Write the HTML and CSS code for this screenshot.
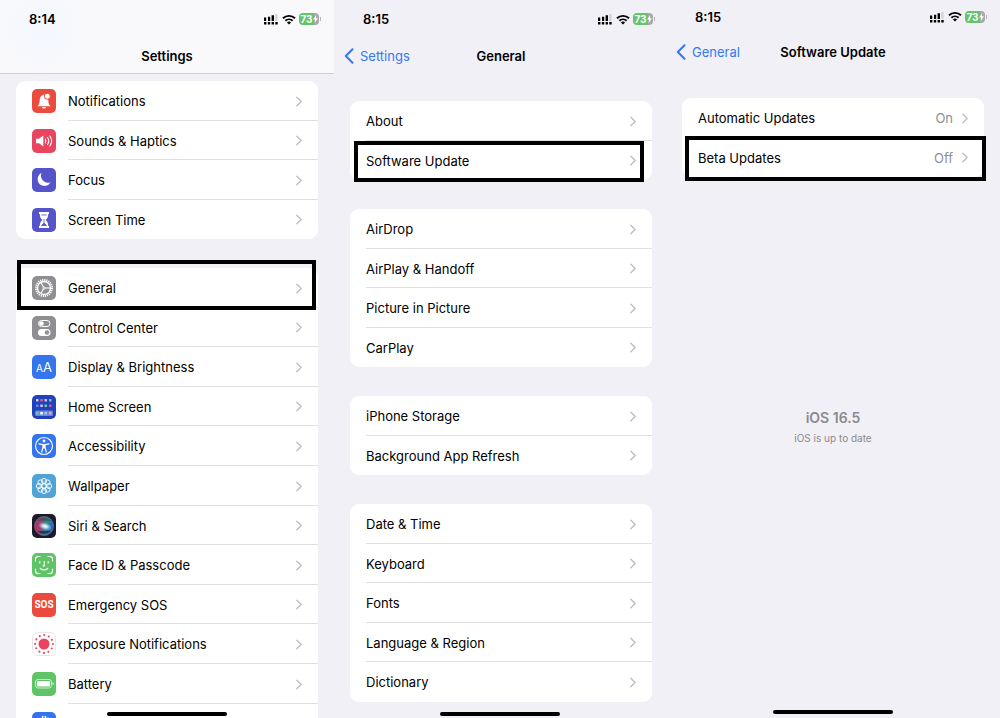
FILE: index.html
```html
<!DOCTYPE html>
<html lang="en">
<head>
    <meta charset="UTF-8">
    <meta name="viewport" content="width=device-width, initial-scale=1.0">
    <title>Settings</title>
    <link rel="stylesheet" href="styles.css">
</head>
<body>
    <svg class="sprite" aria-hidden="true">
        <symbol id="chevron" viewBox="0 0 7 12">
            <path d="M1 1l5 5-5 5" fill="none" stroke="#c0c0c4" stroke-width="1.7" stroke-linecap="round" stroke-linejoin="round"/>
        </symbol>
        <symbol id="back" viewBox="0 0 10 16">
            <path d="M8.5 1.2L1.8 8l6.7 6.8" fill="none" stroke="#3478f0" stroke-width="2" stroke-linecap="round" stroke-linejoin="round"/>
        </symbol>
        <symbol id="signal" viewBox="0 0 14 12">
            <path d="M0 4.6h2.2V8H0zM4 3.8h2.2V8H4zM7.6 2.2h2.4V8H7.6z"/>
            <path d="M11.4 1h2v7h-2z" fill="#cfcfd3"/>
            <path d="M0 9h2.4v2.4H0zM3.8 9h2.4v2.400H3.8zM7.6 9H10v2.400H7.6zM11.300 9h2.400v2.400h-2.400z"/>
        </symbol>
        <symbol id="wifi" viewBox="0 0 14 11">
            <path d="M1 4.3a8.6 8.6 0 0 1 12 0M3.4 6.8a5.2 5.2 0 0 1 7.2 0" fill="none" stroke="#000" stroke-width="1.9"/>
            <path d="M7 10.6L4.9 8.5a3 3 0 0 1 4.2 0z"/>
        </symbol>
        <symbol id="bolt" viewBox="0 0 6 10">
            <path d="M4 0L0 5.6h2.5L2 10l4-5.8H3.4z" fill="#fff"/>
        </symbol>
    </svg>

    <main class="screens">
        <section class="screen screen-settings">
            <header class="top">
                <div class="status">
                    <span class="time">8:14</span>
                    <svg class="signal"><use href="#signal"/></svg>
                    <svg class="wifi"><use href="#wifi"/></svg>
                    <span class="battery">73<svg class="bolt"><use href="#bolt"/></svg></span>
                </div>
                <div class="nav">
                    <h1>Settings</h1>
                </div>
            </header>

            <ul class="group">
                <li><a class="row" href="#">
                    <svg class="icon" viewBox="0 0 24 24">
                        <rect width="24" height="24" rx="5" fill="#ea4b3d"/>
                        <path d="M5.5 17.2c1.7-1.5 2-3 2.2-6C7.900 8 9.500 5.700 12 5.700s4.100 2.300 4.300 5.500c.2 3 .5 4.500 2.200 6zM10 18h4a2 1.500 0 0 1-4 0z" fill="#fff"/>
                        <circle cx="15.300" cy="7.300" r="3" fill="#fff" stroke="#ea4b3d"/>
                    </svg>
                    <span class="label">Notifications</span><svg class="chevron"><use href="#chevron"/></svg>
                </a></li>
                <li><a class="row" href="#">
                    <svg class="icon" viewBox="0 0 24 24">
                        <rect width="24" height="24" rx="5" fill="#e8455f"/>
                        <path d="M4 9.800h3L11.300 6.500v11L7 14.200H4z" fill="#fff"/>
                        <path d="M13.300 10.200q1.200 1.800 0 3.600M15.500 8.500q2.500 3.500 0 7M17.800 7q3.600 5 0 10" fill="none" stroke="#fff" stroke-width="1.100" stroke-linecap="round"/>
                    </svg>
                    <span class="label">Sounds &amp; Haptics</span><svg class="chevron"><use href="#chevron"/></svg>
                </a></li>
                <li><a class="row" href="#">
                    <svg class="icon" viewBox="0 0 24 24">
                        <rect width="24" height="24" rx="5" fill="#5654ca"/>
                        <path d="M9.500 5a7 7 0 0 0 9 9.200A6.800 6.800 0 1 1 9.500 5z" fill="#fff"/>
                    </svg>
                    <span class="label">Focus</span><svg class="chevron"><use href="#chevron"/></svg>
                </a></li>
                <li><a class="row" href="#">
                    <svg class="icon" viewBox="0 0 24 24">
                        <rect width="24" height="24" rx="5" fill="#5654ca"/>
                        <path d="M7 4h10v2h-.8c0 3-1 4.700-2.700 6 1.700 1.300 2.700 3 2.700 6h.8v2H7v-2h.8c0-3 1-4.700 2.700-6-1.700-1.300-2.700-3-2.700-6H7z" fill="#fff"/>
                        <path d="M9.300 7h5.400M12 11v4M9.500 17.500L12 15l2.500 2.500z" fill="#5654ca" stroke="#5654ca" stroke-width=".8"/>
                    </svg>
                    <span class="label">Screen Time</span><svg class="chevron"><use href="#chevron"/></svg>
                </a></li>
            </ul>

            <ul class="group">
                <li class="marked"><a class="row" href="#">
                    <svg class="icon" viewBox="0 0 24 24">
                        <rect width="24" height="24" rx="5" fill="#8e8e93"/>
                        <circle cx="12" cy="12" r="8" fill="none" stroke="#fff" stroke-width="2" stroke-dasharray="1.200 .894"/>
                        <circle cx="12" cy="12" r="6.500" fill="none" stroke="#fff" stroke-width="1.300"/>
                        <path d="M12 12h6M12 12L9 6.800M12 12l-3 5.200" stroke="#fff" stroke-width="1.100"/>
                        <circle cx="12" cy="12" r="1.500" fill="#fff"/>
                        <circle cx="12" cy="12" r=".7" fill="#8e8e93"/>
                    </svg>
                    <span class="label">General</span><svg class="chevron"><use href="#chevron"/></svg>
                </a></li>
                <li><a class="row" href="#">
                    <svg class="icon" viewBox="0 0 24 24">
                        <rect width="24" height="24" rx="5" fill="#8e8e93"/>
                        <rect x="6.500" y="4.500" width="11.500" height="6" rx="3" fill="none" stroke="#fff"/>
                        <circle cx="9.500" cy="7.500" r="2.300" fill="#fff"/>
                        <rect x="6" y="13" width="12.500" height="7" rx="3.500" fill="#fff"/>
                        <circle cx="15" cy="16.500" r="2.200" fill="#8e8e93"/>
                    </svg>
                    <span class="label">Control Center</span><svg class="chevron"><use href="#chevron"/></svg>
                </a></li>
                <li><a class="row" href="#">
                    <span class="icon icon-text icon-display"><small>A</small>A</span>
                    <span class="label">Display &amp; Brightness</span><svg class="chevron"><use href="#chevron"/></svg>
                </a></li>
                <li><a class="row" href="#">
                    <svg class="icon" viewBox="0 0 24 24">
                        <rect width="24" height="24" rx="5" fill="#2141bd"/>
                        <rect x="3" y="15.500" width="18" height="5.500" rx="1.500" fill="#6f88dc"/>
                        <path d="M4 4h2.500v2.500H4zM12.500 4H15v2.500h-2.500zM8.300 9.500h2.500V12H8.300z" fill="#d9c2ee"/>
                        <path d="M8.300 4h2.500v2.500H8.300zM17 9.500h2.500V12H17z" fill="#e25b78"/>
                        <path d="M17 4h2.500v2.500H17zM12.500 9.500H15V12h-2.500zM4 17h2.500v2.500H4z" fill="#6dcb9b"/>
                        <path d="M4 9.500h2.500V12H4z" fill="#5b8cf0"/>
                        <path d="M8.300 17h2.500v2.500H8.300z" fill="#fff"/>
                        <path d="M12.500 17H15v2.500h-2.500z" fill="#9cc8f5"/>
                        <path d="M17 17h2.500v2.500H17z" fill="#e6a6bd"/>
                    </svg>
                    <span class="label">Home Screen</span><svg class="chevron"><use href="#chevron"/></svg>
                </a></li>
                <li><a class="row" href="#">
                    <svg class="icon" viewBox="0 0 24 24">
                        <rect width="24" height="24" rx="5" fill="#3475ee"/>
                        <circle cx="12" cy="12" r="8.500" fill="none" stroke="#fff" stroke-width="1.100"/>
                        <circle cx="12" cy="7" r="1.400" fill="#fff"/>
                        <path d="M7 9.800l3.700.8h2.600l3.700-.8M10.900 10.600v3L9.700 18M13.100 10.600v3l1.200 4.400M12 10.500v3.500" fill="none" stroke="#fff" stroke-width="1.200" stroke-linecap="round"/>
                    </svg>
                    <span class="label">Accessibility</span><svg class="chevron"><use href="#chevron"/></svg>
                </a></li>
                <li><a class="row" href="#">
                    <svg class="icon" viewBox="0 0 24 24">
                        <rect width="24" height="24" rx="5" fill="#52a3d5"/>
                        <g fill="none" stroke="#fff" stroke-width=".9">
                            <circle cx="12" cy="12" r="2.200"/>
                            <circle cx="12" cy="7" r="2.600"/>
                            <circle cx="15.500" cy="8.500" r="2.600"/>
                            <circle cx="17" cy="12" r="2.600"/>
                            <circle cx="15.500" cy="15.500" r="2.600"/>
                            <circle cx="12" cy="17" r="2.600"/>
                            <circle cx="8.500" cy="15.500" r="2.600"/>
                            <circle cx="7" cy="12" r="2.600"/>
                            <circle cx="8.500" cy="8.500" r="2.600"/>
                        </g>
                    </svg>
                    <span class="label">Wallpaper</span><svg class="chevron"><use href="#chevron"/></svg>
                </a></li>
                <li><a class="row" href="#">
                    <svg class="icon" viewBox="0 0 24 24">
                        <defs>
                            <linearGradient id="siri-orb" x1="0" y1=".4" x2="1" y2=".6">
                                <stop offset="0" stop-color="#c22a5e"/>
                                <stop offset=".4" stop-color="#8f4a78"/>
                                <stop offset=".6" stop-color="#2d8a86"/>
                                <stop offset="1" stop-color="#2f5fd0"/>
                            </linearGradient>
                            <radialGradient id="siri-glow">
                                <stop offset="0" stop-color="#fff"/>
                                <stop offset=".4" stop-color="#d8f2ff" stop-opacity=".8"/>
                                <stop offset="1" stop-color="#8fd0ff" stop-opacity="0"/>
                            </radialGradient>
                        </defs>
                        <rect width="24" height="24" rx="5" fill="#1d1b2b"/>
                        <circle cx="12" cy="12" r="9.500" fill="url(#siri-orb)" stroke="#77798f" stroke-width=".6"/>
                        <path d="M5 7q8-7 14 0-7-1-14 0z" fill="#1b5c4c" opacity=".7"/>
                        <path d="M5 17q7 6 14 0-7 0-14 0z" fill="#171d4a" opacity=".7"/>
                        <ellipse cx="13" cy="12" rx="7" ry="4" fill="url(#siri-glow)" transform="rotate(15 12 12)"/>
                    </svg>
                    <span class="label">Siri &amp; Search</span><svg class="chevron"><use href="#chevron"/></svg>
                </a></li>
                <li><a class="row" href="#">
                    <svg class="icon" viewBox="0 0 24 24">
                        <rect width="24" height="24" rx="5" fill="#5fc466"/>
                        <path d="M3.500 8V6a2.500 2.500 0 0 1 2.500-2.500h2M16 3.500h2A2.500 2.500 0 0 1 20.500 6v2M20.500 16v2a2.500 2.500 0 0 1-2.500 2.500h-2M8 20.500H6A2.500 2.500 0 0 1 3.500 18v-2M7.800 8.500V10M16.200 8.500V10M12.300 8.500v4.300h-1.200M8.300 15.500q3.700 3 7.400 0" fill="none" stroke="#fff" stroke-width="1.200" stroke-linecap="round"/>
                    </svg>
                    <span class="label">Face ID &amp; Passcode</span><svg class="chevron"><use href="#chevron"/></svg>
                </a></li>
                <li><a class="row" href="#">
                    <span class="icon icon-text icon-sos">SOS</span>
                    <span class="label">Emergency SOS</span><svg class="chevron"><use href="#chevron"/></svg>
                </a></li>
                <li><a class="row" href="#">
                    <svg class="icon" viewBox="0 0 24 24">
                        <rect x=".5" y=".5" width="23" height="23" rx="5" fill="#fff" stroke="#e6e6ea"/>
                        <circle cx="12" cy="12" r="5.500" fill="#e8455f"/>
                        <circle cx="12" cy="12" r="8.900" fill="none" stroke="#e8455f" stroke-width="2.100" stroke-linecap="round" stroke-dasharray="0 4.660"/>
                    </svg>
                    <span class="label">Exposure Notifications</span><svg class="chevron"><use href="#chevron"/></svg>
                </a></li>
                <li><a class="row" href="#">
                    <svg class="icon" viewBox="0 0 24 24">
                        <rect width="24" height="24" rx="5" fill="#5fc466"/>
                        <rect x="3.500" y="7.500" width="16" height="8.500" rx="2.500" fill="none" stroke="#d9f3db" stroke-width=".9"/>
                        <rect x="5" y="9" width="13" height="5.500" rx="1" fill="#fff"/>
                        <path d="M20.700 10.300v3q1-.5 1-1.500t-1-1.500z" fill="#fff"/>
                    </svg>
                    <span class="label">Battery</span><svg class="chevron"><use href="#chevron"/></svg>
                </a></li>
                <li><a class="row" href="#" aria-label="Privacy">
                    <svg class="icon" viewBox="0 0 24 24">
                        <rect width="24" height="24" rx="5" fill="#3475ee"/>
                        <path d="M8 14V6.500M10.700 12V4.500M13.400 12V4.500M16 13V6M8 12h8v4q-1 3.500-4 3.500T8 16z" fill="#fff" stroke="#fff" stroke-width="1.500" stroke-linecap="round"/>
                    </svg>
                </a></li>
            </ul>
            <div class="home-bar"></div>
        </section>

        <section class="screen screen-general">
            <header class="top">
                <div class="status">
                    <span class="time">8:15</span>
                    <svg class="signal"><use href="#signal"/></svg>
                    <svg class="wifi"><use href="#wifi"/></svg>
                    <span class="battery">73<svg class="bolt"><use href="#bolt"/></svg></span>
                </div>
                <div class="nav">
                    <a class="back" href="#"><svg class="back-arrow"><use href="#back"/></svg>Settings</a>
                    <h1>General</h1>
                </div>
            </header>

            <ul class="group">
                <li><a class="row" href="#"><span class="label">About</span><svg class="chevron"><use href="#chevron"/></svg></a></li>
                <li class="marked"><a class="row" href="#"><span class="label">Software Update</span><svg class="chevron"><use href="#chevron"/></svg></a></li>
            </ul>
            <ul class="group">
                <li><a class="row" href="#"><span class="label">AirDrop</span><svg class="chevron"><use href="#chevron"/></svg></a></li>
                <li><a class="row" href="#"><span class="label">AirPlay &amp; Handoff</span><svg class="chevron"><use href="#chevron"/></svg></a></li>
                <li><a class="row" href="#"><span class="label">Picture in Picture</span><svg class="chevron"><use href="#chevron"/></svg></a></li>
                <li><a class="row" href="#"><span class="label">CarPlay</span><svg class="chevron"><use href="#chevron"/></svg></a></li>
            </ul>
            <ul class="group">
                <li><a class="row" href="#"><span class="label">iPhone Storage</span><svg class="chevron"><use href="#chevron"/></svg></a></li>
                <li><a class="row" href="#"><span class="label">Background App Refresh</span><svg class="chevron"><use href="#chevron"/></svg></a></li>
            </ul>
            <ul class="group">
                <li><a class="row" href="#"><span class="label">Date &amp; Time</span><svg class="chevron"><use href="#chevron"/></svg></a></li>
                <li><a class="row" href="#"><span class="label">Keyboard</span><svg class="chevron"><use href="#chevron"/></svg></a></li>
                <li><a class="row" href="#"><span class="label">Fonts</span><svg class="chevron"><use href="#chevron"/></svg></a></li>
                <li><a class="row" href="#"><span class="label">Language &amp; Region</span><svg class="chevron"><use href="#chevron"/></svg></a></li>
                <li><a class="row" href="#"><span class="label">Dictionary</span><svg class="chevron"><use href="#chevron"/></svg></a></li>
            </ul>
            <div class="home-bar"></div>
        </section>

        <section class="screen screen-update">
            <header class="top">
                <div class="status">
                    <span class="time">8:15</span>
                    <svg class="signal"><use href="#signal"/></svg>
                    <svg class="wifi"><use href="#wifi"/></svg>
                    <span class="battery">73<svg class="bolt"><use href="#bolt"/></svg></span>
                </div>
                <div class="nav">
                    <a class="back" href="#"><svg class="back-arrow"><use href="#back"/></svg>General</a>
                    <h1>Software Update</h1>
                </div>
            </header>

            <ul class="group">
                <li><a class="row" href="#"><span class="label">Automatic Updates</span><span class="value">On</span><svg class="chevron"><use href="#chevron"/></svg></a></li>
                <li class="marked"><a class="row" href="#"><span class="label">Beta Updates</span><span class="value">Off</span><svg class="chevron"><use href="#chevron"/></svg></a></li>
            </ul>
            <div class="version">
                <h2>iOS 16.5</h2>
                <p>iOS is up to date</p>
            </div>
            <div class="home-bar"></div>
        </section>
    </main>
</body>
</html>
```
FILE: styles.css
```css
* {
    box-sizing: border-box;
}

body {
    margin: 0;
    background-color: #f1f0f6;
    color: #000;
    font-family: Inter, "Liberation Sans", sans-serif;
    font-size: 13px;
    line-height: 20px;
}

h1, h2, p, ul {
    margin: 0;
    padding: 0;
}

a {
    color: inherit;
    text-decoration: none;
}

.sprite {
    position: absolute;
    width: 0;
    height: 0;
}

.screens {
    display: grid;
    grid-template-columns: 334fr 332fr 334fr;
    height: 100vh;
}

.screen {
    --right: 16px;
    position: relative;
    overflow: hidden;
}

.screen-general {
    --right: 14px;
}

/* status bar and title */
.top {
    margin-bottom: 28px;
}

.screen-settings .top {
    margin-bottom: 7px;
    background: radial-gradient(circle at 42px 30px, #f3f7fe, #f9f9fb 50px);
    border-bottom: 1px solid #cfcfd4;
}

.status {
    display: flex;
    align-items: center;
    height: 38px;
    padding: 0 calc(var(--right) - 3px) 0 29px;
}

.screen-update .status {
    height: 33px;
}

.time {
    flex: 1;
    font-weight: 600;
}

.signal {
    width: 14px;
    height: 12px;
    margin-right: 4px;
}

.wifi {
    width: 14px;
    height: 11px;
    margin-right: 3px;
}

.battery {
    position: relative;
    display: flex;
    align-items: center;
    justify-content: center;
    width: 20px;
    height: 12px;
    margin-right: 2px;
    border-radius: 4px;
    background: linear-gradient(90deg, #65c467 75%, #a9a9ad 75%);
    color: #fff;
    font-size: 10px;
    font-weight: 700;
    line-height: 12px;
}

.battery::after {
    content: "";
    position: absolute;
    right: -2px;
    top: 4px;
    width: 1px;
    height: 4px;
    background-color: #b5b5b9;
}

.bolt {
    width: 5px;
    height: 8px;
}

.nav {
    display: grid;
    grid-template-columns: 1fr auto 1fr;
    align-items: center;
    height: 35px;
    padding: 0 var(--right) 0 16px;
}

.screen-update .nav {
    height: 37px;
}

.nav h1 {
    grid-column: 2;
    font-size: 13px;
    font-weight: 600;
}

.back {
    display: flex;
    align-items: center;
    gap: 6px;
    margin-left: -6px;
    color: #3478f0;
}

.back-arrow {
    width: 10px;
    height: 16px;
}

/* grouped lists */
.group {
    display: grid;
    grid-auto-rows: 40px 39px 40px 39px 40px;
    margin: 0 var(--right) 29px 16px;
    border-radius: 9px;
    background-color: #fff;
    list-style: none;
}

.group li {
    position: relative;
}

.row {
    position: relative;
    display: flex;
    align-items: center;
    height: 100%;
    padding: 0 16px;
}

.group li:not(:last-child) .row::after {
    content: "";
    position: absolute;
    left: 16px;
    right: 0;
    bottom: 0;
    height: 1px;
    background-color: #dfdfe3;
}

.screen-settings .group li:not(:last-child) .row::after {
    left: 52px;
}

.label {
    flex: 1;
}

.value {
    margin-right: 9px;
    color: #8e8e93;
}

.chevron {
    width: 6px;
    height: 11px;
}

.icon {
    width: 24px;
    height: 24px;
    margin-right: 12px;
}

.icon-text {
    display: flex;
    align-items: baseline;
    justify-content: center;
    border-radius: 5px;
    color: #fff;
    line-height: 24px;
}

.icon-display {
    background-color: #3475ee;
    font-size: 13px;
}

.icon-display small {
    font-size: 10px;
}

.icon-sos {
    background-color: #ea4b3d;
    font-family: "Liberation Sans Narrow", Roboto, sans-serif;
    font-size: 10px;
    font-weight: 700;
}

/* black frame round the row to tap */
.marked::after {
    content: "";
    position: absolute;
    z-index: 1;
    inset: -8px 2px -2px 1px;
    border: 4px solid #000;
    pointer-events: none;
}

.screen-general .marked::after {
    inset: 0 8px -2px 4px;
}

.screen-update .marked::after {
    inset: -2px -2px -4px 3px;
}

.version {
    margin-top: 231px;
    color: #8a8a90;
    text-align: center;
}

.version h2 {
    font-size: 14px;
    font-weight: 600;
}

.version p {
    font-size: 10px;
}

.home-bar {
    position: absolute;
    bottom: 2px;
    left: 50%;
    width: 120px;
    height: 4px;
    margin-left: -60px;
    border-radius: 2px;
    background-color: #000;
}

.screen-update .home-bar {
    bottom: 4px;
}
```
